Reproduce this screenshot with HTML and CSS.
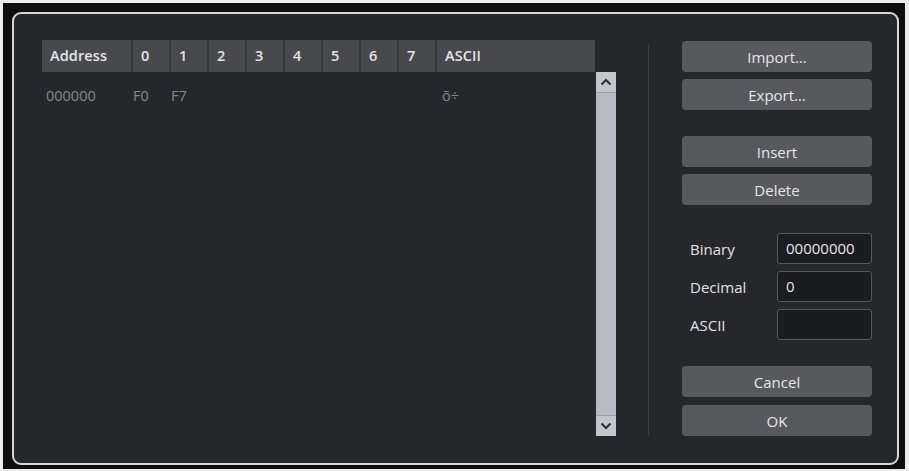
FILE: index.html
```html
<!DOCTYPE html>
<html>
<head>
<meta charset="utf-8">
<link rel="stylesheet" href="styles.css">
</head>
<body>
<div class="frame">
  <div class="panel">
    <div class="left">
      <div class="thead">
        <div class="th c-addr">Address</div>
        <div class="th c-hex">0</div>
        <div class="th c-hex">1</div>
        <div class="th c-hex">2</div>
        <div class="th c-hex">3</div>
        <div class="th c-hex">4</div>
        <div class="th c-hex">5</div>
        <div class="th c-hex">6</div>
        <div class="th c-hex">7</div>
        <div class="th c-ascii">ASCII</div>
      </div>
      <div class="tbody-wrap">
        <div class="tbody">
          <div class="tr">
            <div class="td c-addr">000000</div>
            <div class="td c-hex">F0</div>
            <div class="td c-hex">F7</div>
            <div class="td c-hex"></div>
            <div class="td c-hex"></div>
            <div class="td c-hex"></div>
            <div class="td c-hex"></div>
            <div class="td c-hex"></div>
            <div class="td c-hex"></div>
            <div class="td c-ascii">õ÷</div>
          </div>
        </div>
        <div class="scrollbar">
          <div class="sb-btn sb-up">
            <svg width="12" height="8" viewBox="0 0 12 8"><path d="M1.5 6.5 L6 2 L10.5 6.5" fill="none" stroke="#2b2d31" stroke-width="2"/></svg>
          </div>
          <div class="sb-track"></div>
          <div class="sb-btn sb-down">
            <svg width="12" height="8" viewBox="0 0 12 8"><path d="M1.5 1.5 L6 6 L10.5 1.5" fill="none" stroke="#2b2d31" stroke-width="2"/></svg>
          </div>
        </div>
      </div>
    </div>
    <div class="divider"></div>
    <div class="right">
      <div class="group">
        <button class="btn">Import…</button>
        <button class="btn">Export…</button>
      </div>
      <div class="group">
        <button class="btn">Insert</button>
        <button class="btn">Delete</button>
      </div>
      <div class="fields">
        <div class="field"><span class="label">Binary</span><div class="input">00000000</div></div>
        <div class="field"><span class="label">Decimal</span><div class="input">0</div></div>
        <div class="field"><span class="label">ASCII</span><div class="input"></div></div>
      </div>
      <div class="group group-last">
        <button class="btn">Cancel</button>
        <button class="btn">OK</button>
      </div>
    </div>
  </div>
</div>
</body>
</html>
```
FILE: styles.css
```css
html, body {
  margin: 0;
  padding: 0;
}
body {
  background: #ececec;
  width: 909px;
  height: 471px;
  overflow: hidden;
  font-family: "Open Sans", "Noto Sans", sans-serif;
}
.frame {
  margin: 3px 0 0 3px;
  width: 902px;
  height: 466px;
  box-sizing: border-box;
  padding: 9px 6px 4px 9px;
  background: #0e0e0f;
}
.panel {
  box-sizing: border-box;
  width: 887px;
  height: 453px;
  border: 2px solid #d6d6d6;
  border-radius: 9px;
  background: #25272b;
  display: flex;
  padding: 26px 0 0 28px;
}
.left {
  width: 575px;
  display: flex;
  flex-direction: column;
}
.thead {
  display: flex;
  gap: 2px;
  width: 553px;
  height: 32px;
  background: #37383c;
}
.th {
  background: #48494d;
  color: #e4e4e6;
  font-size: 14.5px;
  font-weight: 600;
  line-height: 32px;
  padding-left: 8px;
  box-sizing: border-box;
  letter-spacing: 0.1px;
}
.c-addr { width: 89px; }
.c-hex { width: 36px; }
.c-ascii { width: 158px; }
.tbody-wrap {
  display: flex;
  height: 364px;
}
.tbody {
  width: 554px;
  padding-top: 12px;
}
.tr {
  display: flex;
  gap: 2px;
}
.td {
  color: #85878b;
  font-size: 14.5px;
  line-height: 24px;
  box-sizing: border-box;
}
.td.c-addr { padding-left: 4px; }
.td.c-hex { padding-left: 0; }
.td.c-ascii { padding-left: 5px; }
.scrollbar {
  width: 20px;
  display: flex;
  flex-direction: column;
  background: #b6bbc3;
}
.sb-btn {
  height: 20px;
  background: #c3c7cd;
  display: flex;
  align-items: center;
  justify-content: center;
}
.sb-up { border-bottom: 1px solid #9ca1a8; }
.sb-down { border-top: 1px solid #9ca1a8; }
.sb-track { flex: 1; }
.divider {
  width: 1px;
  height: 390px;
  margin: 5px 0 0 31px;
  background: #3f4145;
}
.right {
  margin-left: 33px;
  width: 190px;
  padding-top: 1px;
  display: flex;
  flex-direction: column;
}
.group {
  display: flex;
  flex-direction: column;
  gap: 7px;
}
.group + .group { margin-top: 26px; }
.group-last { gap: 8px; }
.btn {
  height: 31px;
  width: 190px;
  border: none;
  border-radius: 4px;
  background: #58595d;
  color: #e6e6e8;
  font-family: "Open Sans", "Noto Sans", sans-serif;
  font-size: 15px;
  padding: 0;
}
.fields {
  margin-top: 28px;
  margin-bottom: 26px;
  display: flex;
  flex-direction: column;
  gap: 7px;
}
.field {
  display: flex;
  align-items: center;
  height: 31px;
}
.label {
  width: 95px;
  padding-left: 8px;
  box-sizing: border-box;
  color: #e2e2e4;
  font-size: 15px;
}
.input {
  width: 95px;
  height: 31px;
  box-sizing: border-box;
  border: 1px solid #56585c;
  border-radius: 3px;
  background: #1b1c1f;
  color: #e6e6e8;
  font-size: 15px;
  line-height: 29px;
  padding-left: 8px;
}
.fields + .group { margin-top: 0; }
```
